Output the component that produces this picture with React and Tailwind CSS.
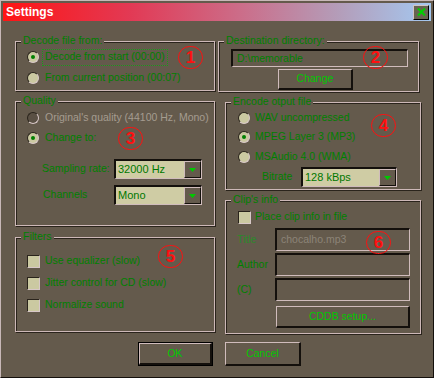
const FONT = { fontFamily: '"Liberation Sans", Arial, sans-serif' };

const Group = ({ title, className, children }) => (
  <div className={`relative border border-[#cdb8b8] shadow-[1px_1px_0_#2a241c,inset_1px_1px_0_#2a241c] ${className}`}>
    <span className="absolute -top-[8px] left-[5px] bg-[#645a4c] px-[2px] text-[10.5px] leading-[12px] text-[#008000]">
      {title}
    </span>
    {children}
  </div>
);

const Mark = ({ n, className }) => (
  <div className={`absolute w-[25px] h-[23px] rounded-full border border-[#ff1010] flex items-center justify-center text-[17px] font-bold leading-none text-[#ff1010] ${className}`}>
    {n}
  </div>
);

const Radio = ({ checked, disabled }) => (
  <span
    className={`w-[12px] h-[12px] shrink-0 rounded-full border border-t-[#2a241c] border-l-[#2a241c] border-r-[#d8c8c8] border-b-[#d8c8c8] flex items-center justify-center ${
      disabled ? "bg-[#5a5044]" : "bg-[#cbc9a1]"
    }`}
  >
    {checked && <span className="w-[4px] h-[4px] rounded-full bg-[#008000]" />}
  </span>
);

const Check = () => (
  <span className="w-[13px] h-[13px] shrink-0 bg-[#cbc9a1] border border-t-[#2a241c] border-l-[#2a241c] border-r-[#d8c8c8] border-b-[#d8c8c8]" />
);

const Select = ({ value, className }) => (
  <div className={`h-[20px] flex bg-[#cfcca4] border-t-2 border-l-2 border-r border-b border-t-[#14100c] border-l-[#14100c] border-r-[#d0bcbc] border-b-[#d0bcbc] ${className}`}>
    <span className="flex-1 flex items-center pl-[2px] text-[11px] text-[#007800]">{value}</span>
    <span className="w-[17px] h-full bg-[#645a4c] border-t border-l border-r border-b border-t-[#d0bcbc] border-l-[#d0bcbc] border-r-[#14100c] border-b-[#14100c] flex items-center justify-center">
      <svg width="7" height="4" viewBox="0 0 7 4">
        <polygon points="0,0 7,0 3.5,4" fill="#00c800" />
      </svg>
    </span>
  </div>
);

const Field = ({ value, className }) => (
  <div className={`flex items-center pl-[4px] bg-[#645a4c] border-t-2 border-l-2 border-r border-b border-t-[#14100c] border-l-[#14100c] border-r-[#d0bcbc] border-b-[#d0bcbc] text-[10.5px] ${className}`}>
    {value}
  </div>
);

const Button = ({ label, className }) => (
  <div className={`flex items-center justify-center bg-[#645a4c] border-t border-l border-r-2 border-b-2 border-t-[#d0bcbc] border-l-[#d0bcbc] border-r-[#14100c] border-b-[#14100c] text-[10.5px] text-[#00c800] ${className}`}>
    {label}
  </div>
);

export default function App() {
  return (
    <div style={FONT} className="w-[434px] h-[378px] bg-[#645a4c] border border-t-[#c8b8b8] border-l-[#c8b8b8] border-r-[#14100c] border-b-[#14100c] p-[2px] overflow-hidden">
      {/* TITLE BAR */}
      <div className="h-[18px] flex items-center justify-between bg-[linear-gradient(to_right,#ff1414,#e23a55_30%,#cc6c88_55%,#b49cb8_78%,#a4c8f0)]">
        <span className="pl-[3px] text-[12px] font-bold text-white leading-none">Settings</span>
        <span className="mr-[2px] w-[16px] h-[15px] bg-[#676450] border-t border-l border-r border-b border-t-[#d0c4c4] border-l-[#d0c4c4] border-r-[#000] border-b-[#000] flex items-center justify-center">
          <svg width="9" height="8" viewBox="0 0 9 8">
            <path d="M1 0.5 L8 7.5 M8 0.5 L1 7.5" stroke="#00d000" strokeWidth="2" />
          </svg>
        </span>
      </div>

      {/* BODY */}
      <div className="pt-[20px] flex pl-[12px] gap-[3px]">
        {/* LEFT COLUMN */}
        <div className="w-[200px] flex flex-col">
          <Group title="Decode file from:" className="h-[50px]">
            <div className="pt-[7px] pl-[11px] flex flex-col gap-[5px]">
              <div className="h-[16px] flex items-center">
                <Radio checked />
                <span className="ml-[4px] h-[15px] px-[2px] flex items-center outline outline-1 outline-dotted outline-[#1a9a1a] text-[10.5px] text-[#008000]">
                  Decode from start (00:00)
                </span>
              </div>
              <div className="h-[16px] flex items-center gap-[6px]">
                <Radio />
                <span className="text-[10.5px] text-[#008000]">From current position (00:07)</span>
              </div>
            </div>
            <Mark n="1" className="left-[162px] top-[4px]" />
          </Group>

          <Group title="Quality" className="h-[125px] mt-[10px]">
            <div className="pt-[8px] pl-[11px] flex flex-col">
              <div className="h-[16px] flex items-center gap-[6px]">
                <Radio disabled />
                <span className="text-[10.5px] text-[#a49c90]">Original's quality (44100 Hz, Mono)</span>
              </div>
              <div className="h-[16px] mt-[4px] flex items-center gap-[6px]">
                <Radio checked />
                <span className="text-[10.5px] text-[#008000]">Change to:</span>
              </div>
              <div className="mt-[13px] ml-[15px] flex items-center">
                <span className="w-[72px] text-[10.5px] text-[#008000]">Sampling rate:</span>
                <Select value="32000 Hz" className="w-[88px]" />
              </div>
              <div className="mt-[6px] ml-[16px] flex items-center">
                <span className="w-[71px] text-[10.5px] text-[#008000]">Channels</span>
                <Select value="Mono" className="w-[88px]" />
              </div>
            </div>
            <Mark n="3" className="left-[102px] top-[25px]" />
          </Group>

          <Group title="Filters" className="h-[95px] mt-[11px]">
            <div className="pt-[15px] pl-[11px] flex flex-col gap-[6px]">
              {["Use equalizer (slow)", "Jitter control for CD (slow)", "Normalize sound"].map((t) => (
                <div key={t} className="h-[16px] flex items-center gap-[5px]">
                  <Check />
                  <span className="text-[10.5px] text-[#008000]">{t}</span>
                </div>
              ))}
            </div>
            <Mark n="5" className="left-[142px] top-[7px]" />
          </Group>
        </div>

        {/* RIGHT COLUMN */}
        <div className="w-[202px] flex flex-col">
          <Group title="Destination directory:" className="w-[201px] h-[51px]">
            <div className="pt-[7px] pl-[12px]">
              <Field value={<span className="text-[#008000]">D:\memorable</span>} className="w-[177px] h-[18px]" />
              <Button label="Change" className="ml-[47px] mt-[2px] w-[75px] h-[21px]" />
            </div>
            <Mark n="2" className="left-[144px] top-[4px]" />
          </Group>

          <Group title="Encode otput file" className="ml-[7px] w-[196px] h-[88px] mt-[10px]">
            <div className="pt-[7px] pl-[12px] flex flex-col">
              <div className="h-[16px] flex items-center gap-[5px]">
                <Radio />
                <span className="text-[10.5px] text-[#008000]">WAV uncompressed</span>
              </div>
              <div className="h-[16px] mt-[3px] flex items-center gap-[5px]">
                <Radio checked />
                <span className="text-[10.5px] text-[#008000]">MPEG Layer 3 (MP3)</span>
              </div>
              <div className="h-[16px] mt-[4px] flex items-center gap-[5px]">
                <Radio />
                <span className="text-[10.5px] text-[#008000]">MSAudio 4.0 (WMA)</span>
              </div>
              <div className="mt-[2px] ml-[24px] flex items-center">
                <span className="w-[39px] text-[10.5px] text-[#008000]">Bitrate</span>
                <Select value="128 kBps" className="w-[96px]" />
              </div>
            </div>
            <Mark n="4" className="left-[145px] top-[11px]" />
          </Group>

          <Group title="Clip's info" className="ml-[7px] w-[196px] h-[134px] mt-[10px]">
            <div className="pt-[8px] pl-[11px] flex flex-col">
              <div className="h-[16px] ml-[1px] flex items-center gap-[4px]">
                <Check />
                <span className="text-[10.5px] text-[#008000]">Place clip info in file</span>
              </div>
              <div className="mt-[3px] flex items-center">
                <span className="w-[38px] text-[10.5px] text-[#2a8a2a]">Title</span>
                <Field value={<span className="text-[#8c8478]">chocalho.mp3</span>} className="w-[135px] h-[23px]" />
              </div>
              <div className="mt-[2px] flex items-center">
                <span className="w-[38px] text-[10.5px] text-[#008000]">Author</span>
                <Field value="" className="w-[135px] h-[23px]" />
              </div>
              <div className="mt-[2px] flex items-center">
                <span className="w-[38px] text-[10.5px] text-[#008000]">(C)</span>
                <Field value="" className="w-[135px] h-[23px]" />
              </div>
              <Button label="CDDB setup..." className="ml-[39px] mt-[5px] w-[134px] h-[22px]" />
            </div>
            <Mark n="6" className="left-[140px] top-[30px]" />
          </Group>
        </div>
      </div>

      {/* BUTTONS */}
      <div className="mt-[8px] pl-[135px] flex gap-[12px]">
        <div className="w-[75px] h-[24px] border border-[#000]">
          <Button label="OK" className="w-full h-full" />
        </div>
        <Button label="Cancel" className="w-[76px] h-[24px]" />
      </div>
    </div>
  );
}
